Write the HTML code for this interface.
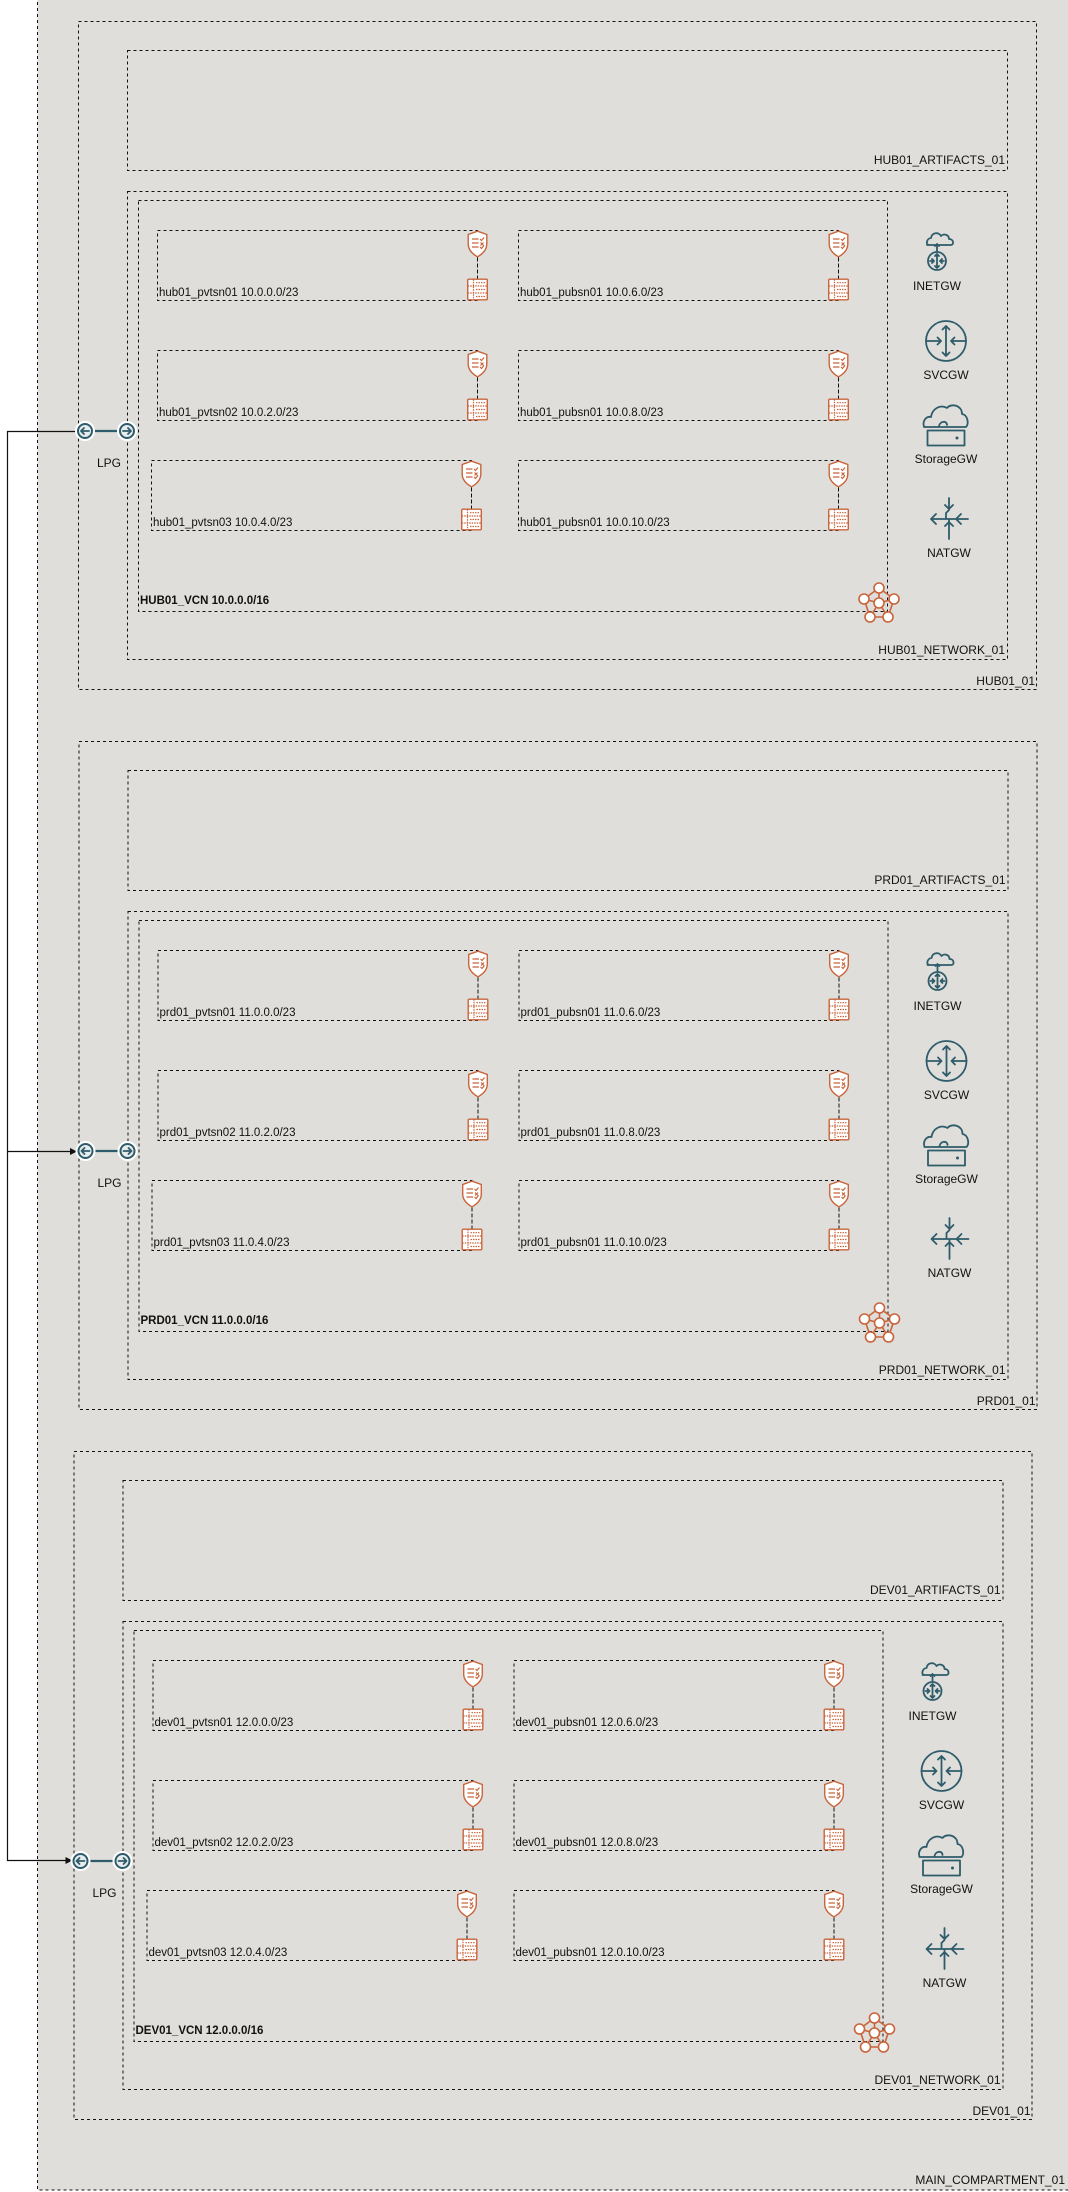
<!DOCTYPE html>
<html><head><meta charset="utf-8"><style>
html,body{margin:0;padding:0;background:#fff;}
svg{display:block;}
text{font-family:"Liberation Sans",Arial,sans-serif;font-size:11.5px;fill:#111;}
.d{fill:none;stroke:#111;stroke-width:1;stroke-dasharray:3 3;}
.o{fill:#fff;stroke:#c9643b;stroke-width:1.4;}
.ol{fill:none;stroke:#c9643b;stroke-width:1.2;}
.t{fill:none;stroke:#2f5c6b;stroke-width:1.8;stroke-linecap:round;stroke-linejoin:round;}
.g{font-size:12px;text-anchor:middle;}
.r{text-anchor:end;font-size:12px;}
.b{font-weight:bold;}
</style></head><body>
<svg width="1068" height="2192" viewBox="0 0 1068 2192" xmlns="http://www.w3.org/2000/svg">
<defs>
<symbol id="shield" viewBox="0 0 20 27" overflow="visible">
<path class="o" d="M10 0.7 L19.3 4 V13.5 C19.3 19.5 15 23.5 10 26.3 C5 23.5 0.7 19.5 0.7 13.5 V4 Z"/>
<path class="ol" d="M4.5 8.5H11M4.5 12.5H11M4.5 16.5H11M12.5 8.5l1.5 1.5 2.5-3M13 12l3 3M16 12l-3 3M12.5 16.5l1.5 1.5 2.5-3"/>
</symbol>
<symbol id="table" viewBox="0 0 21 22" overflow="visible">
<rect class="o" x="0.7" y="0.7" width="19.6" height="20.6" rx="1"/>
<path class="ol" d="M6.5 0.7V21.3M0.7 7.5H20.3M0.7 14.5H20.3M9 4.2h9M9 11h9M9 18h9" stroke-dasharray="1.5 1"/>
</symbol>
<symbol id="sub" overflow="visible">
<rect class="d" x="0.5" y="0.5" width="320" height="70"/>
<use href="#shield" x="310.5" y="0.5" width="20" height="27"/>
<line x1="320.5" y1="27.5" x2="320.5" y2="48.5" class="d"/>
<use href="#table" x="310" y="48.5" width="21" height="22"/>
</symbol>
<symbol id="vcn" overflow="visible">
<g stroke="#c9643b" stroke-width="1.6" fill="none">
<path d="M0 -15 L15 -4 L9 14 L-9 14 L-15 -4 Z M0 -15 L0 0 M15 -4 L0 0 M9 14 L0 0 M-9 14 L0 0 M-15 -4 L0 0"/>
</g>
<g fill="#fff" stroke="#c9643b" stroke-width="1.6">
<circle cx="0" cy="-15" r="5"/><circle cx="15" cy="-4" r="5"/><circle cx="9" cy="14" r="5"/><circle cx="-9" cy="14" r="5"/><circle cx="-15" cy="-4" r="5"/><circle cx="0" cy="0" r="5"/>
</g>
</symbol>
<symbol id="sec" overflow="visible">
<rect class="d" x="78.5" y="21.5" width="958" height="668"/>
<rect class="d" x="127.5" y="50.5" width="880" height="120"/>
<rect class="d" x="127.5" y="191.5" width="880" height="468"/>
<rect class="d" x="138.5" y="200.5" width="749" height="411"/>
<use href="#sub" x="157" y="230"/>
<use href="#sub" x="518" y="230"/>
<use href="#sub" x="157" y="350"/>
<use href="#sub" x="518" y="350"/>
<use href="#sub" x="151" y="460"/>
<use href="#sub" x="518" y="460"/>
<use href="#vcn" x="879" y="603"/>
<!-- LPG -->
<line x1="85" y1="431" x2="127" y2="431" stroke="#2f5c6b" stroke-width="2.2"/>
<g><circle cx="85" cy="431" r="8" fill="#e6ebec" stroke="#fff" stroke-width="4"/><circle cx="85" cy="431" r="7" fill="#e6ebec" stroke="#2f5c6b" stroke-width="2"/>
<path class="t" stroke-width="1.5" d="M89 431H81M84 428l-3 3 3 3"/></g>
<g><circle cx="127" cy="431" r="8" fill="#e6ebec" stroke="#fff" stroke-width="4"/><circle cx="127" cy="431" r="7" fill="#e6ebec" stroke="#2f5c6b" stroke-width="2"/>
<path class="t" stroke-width="1.5" d="M123 431H131M128 428l3 3-3 3"/></g>
<!-- INETGW -->
<path class="t" stroke-width="1.4" d="M927 245 H951 C954 245 954 239 949 239 C949 235 944 233 941 236 C939 232 932 232 931 238 C927 238 925 245 929 245"/>
<path class="t" stroke-width="1.2" d="M937 251V244M935 246l2-2 2 2"/>
<circle cx="937" cy="261" r="9" class="t" stroke-width="1.5"/>
<path class="t" stroke-width="1.2" d="M937 254V268M935 256l2-2 2 2M935 266l2 2 2-2M930 261h4M932 259l2 2-2 2M944 261h-4M942 259l-2 2 2 2"/>
<!-- SVCGW -->
<circle cx="946" cy="341" r="20" class="t" stroke-width="2"/>
<path class="t" stroke-width="1.6" d="M946 326V356M942.5 329.5l3.5-3.5 3.5 3.5M942.5 352.5l3.5 3.5 3.5-3.5M926 341h15M937.5 337.5l3.5 3.5-3.5 3.5M966 341h-15M954.5 337.5l-3.5 3.5 3.5 3.5"/>
<!-- StorageGW -->
<path class="t" stroke-width="2" d="M924 427 C922 420 927 416 931 417 C932 409 940 404 947 408 C951 403 962 405 962 414 C968 415 969 424 966 427 Z M939 427 C939 421 947 420 947 425"/>
<rect x="927.5" y="430.5" width="37" height="15" class="t" stroke-width="2"/>
<circle cx="957" cy="438" r="1.5" fill="#2f5c6b"/>
<!-- NATGW -->
<path class="t" stroke-width="1.6" d="M931 519H968M936 514l-5 5 5 5M949 498V510l-3 3v6M945 505l4 4 4-4M968 519h-12M961 514l-5 5 5 5M949 539V519M945 526l4-4 4 4"/>
<text x="937" y="290" class="g">INETGW</text>
<text x="946" y="379" class="g">SVCGW</text>
<text x="946" y="463" class="g">StorageGW</text>
<text x="949" y="557" class="g">NATGW</text>
<text x="109" y="467" class="g">LPG</text>
</symbol>
</defs>
<rect x="37.5" y="-1" width="1040" height="2191" fill="#dfdeda" stroke="#111" stroke-dasharray="3 3"/>
<text x="1065" y="2184" class="r">MAIN_COMPARTMENT_01</text>

<!-- connector -->
<path d="M78 431.5H7.5V1860.5H70" fill="none" stroke="#111" stroke-width="1.2"/>
<path d="M7.5 1151.5H74" fill="none" stroke="#111" stroke-width="1.2"/>
<path d="M77 1151.5l-7-3.5v7z" fill="#111"/>
<path d="M72.5 1860.5l-7-3.5v7z" fill="#111"/>

<!-- HUB -->
<g>
<use href="#sec"/>
<text x="1005" y="164" class="r">HUB01_ARTIFACTS_01</text>
<text x="1005" y="654" class="r">HUB01_NETWORK_01</text>
<text x="1035" y="685" class="r">HUB01_01</text>
<text x="140" y="604" class="b">HUB01_VCN 10.0.0.0/16</text>
<text x="159" y="296">hub01_pvtsn01 10.0.0.0/23</text>
<text x="520" y="296">hub01_pubsn01 10.0.6.0/23</text>
<text x="159" y="416">hub01_pvtsn02 10.0.2.0/23</text>
<text x="520" y="416">hub01_pubsn01 10.0.8.0/23</text>
<text x="153" y="526">hub01_pvtsn03 10.0.4.0/23</text>
<text x="520" y="526">hub01_pubsn01 10.0.10.0/23</text>
</g>
<!-- PRD -->
<g transform="translate(0.5,720)">
<use href="#sec"/>
<text x="1005" y="164" class="r">PRD01_ARTIFACTS_01</text>
<text x="1005" y="654" class="r">PRD01_NETWORK_01</text>
<text x="1035" y="685" class="r">PRD01_01</text>
<text x="140" y="604" class="b">PRD01_VCN 11.0.0.0/16</text>
<text x="159" y="296">prd01_pvtsn01 11.0.0.0/23</text>
<text x="520" y="296">prd01_pubsn01 11.0.6.0/23</text>
<text x="159" y="416">prd01_pvtsn02 11.0.2.0/23</text>
<text x="520" y="416">prd01_pubsn01 11.0.8.0/23</text>
<text x="153" y="526">prd01_pvtsn03 11.0.4.0/23</text>
<text x="520" y="526">prd01_pubsn01 11.0.10.0/23</text>
</g>
<!-- DEV -->
<g transform="translate(-4.5,1430)">
<use href="#sec"/>
<text x="1005" y="164" class="r">DEV01_ARTIFACTS_01</text>
<text x="1005" y="654" class="r">DEV01_NETWORK_01</text>
<text x="1035" y="685" class="r">DEV01_01</text>
<text x="140" y="604" class="b">DEV01_VCN 12.0.0.0/16</text>
<text x="159" y="296">dev01_pvtsn01 12.0.0.0/23</text>
<text x="520" y="296">dev01_pubsn01 12.0.6.0/23</text>
<text x="159" y="416">dev01_pvtsn02 12.0.2.0/23</text>
<text x="520" y="416">dev01_pubsn01 12.0.8.0/23</text>
<text x="153" y="526">dev01_pvtsn03 12.0.4.0/23</text>
<text x="520" y="526">dev01_pubsn01 12.0.10.0/23</text>
</g>
</svg>
</body></html>
